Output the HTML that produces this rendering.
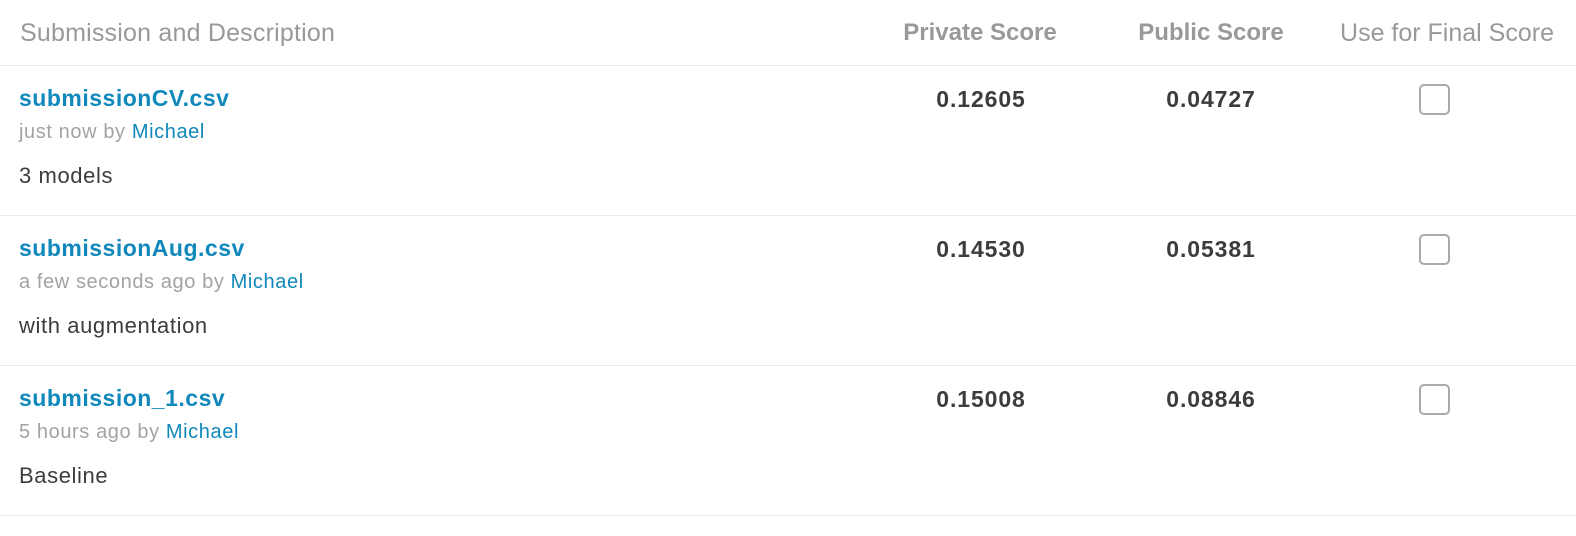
<!DOCTYPE html>
<html><head><meta charset="utf-8"><style>
body{margin:0;width:1576px;height:536px;background:#fff;font-family:"Liberation Sans",sans-serif;position:relative;overflow:hidden}
.a{position:absolute;white-space:nowrap}
.h{top:19px;font-size:24px;color:#999}
.line{position:absolute;left:0;width:1576px;height:1px;background:#ebebeb}
.t{font-size:23px;font-weight:bold;color:#1088bb;left:19px;letter-spacing:0.5px}
.s{font-size:20px;color:#a3a3a3;left:19px;letter-spacing:0.6px}
.s span{color:#1088bb}
.d{font-size:22px;color:#3c3c3c;left:19px;letter-spacing:0.6px}
.n{font-size:23px;font-weight:bold;color:#3c3c3c;width:200px;text-align:center;letter-spacing:0.9px}
.cb{position:absolute;left:1419px;width:27px;height:27px;border:2px solid #aaa;border-radius:5px;box-sizing:content-box}
</style></head><body>
<div class="a h" style="left:20px;font-size:25px;letter-spacing:0.2px">Submission and Description</div>
<div class="a h" style="left:880px;width:200px;text-align:center;font-weight:bold;font-size:24px">Private Score</div>
<div class="a h" style="left:1111px;width:200px;text-align:center;font-weight:bold;font-size:24px">Public Score</div>
<div class="a h" style="left:1327px;width:240px;text-align:center;font-size:25px">Use for Final Score</div>
<div class="line" style="top:65px"></div>

<div class="a t" style="top:85px">submissionCV.csv</div>
<div class="a s" style="top:121px">just now by <span>Michael</span></div>
<div class="a d" style="top:163px">3 models</div>
<div class="a n" style="left:881px;top:86px">0.12605</div>
<div class="a n" style="left:1111px;top:86px">0.04727</div>
<div class="cb" style="top:84px"></div>
<div class="line" style="top:215px"></div>

<div class="a t" style="top:235px">submissionAug.csv</div>
<div class="a s" style="top:271px">a few seconds ago by <span>Michael</span></div>
<div class="a d" style="top:313px">with augmentation</div>
<div class="a n" style="left:881px;top:236px">0.14530</div>
<div class="a n" style="left:1111px;top:236px">0.05381</div>
<div class="cb" style="top:234px"></div>
<div class="line" style="top:365px"></div>

<div class="a t" style="top:385px">submission_1.csv</div>
<div class="a s" style="top:421px">5 hours ago by <span>Michael</span></div>
<div class="a d" style="top:463px">Baseline</div>
<div class="a n" style="left:881px;top:386px">0.15008</div>
<div class="a n" style="left:1111px;top:386px">0.08846</div>
<div class="cb" style="top:384px"></div>
<div class="line" style="top:515px"></div>
</body></html>
